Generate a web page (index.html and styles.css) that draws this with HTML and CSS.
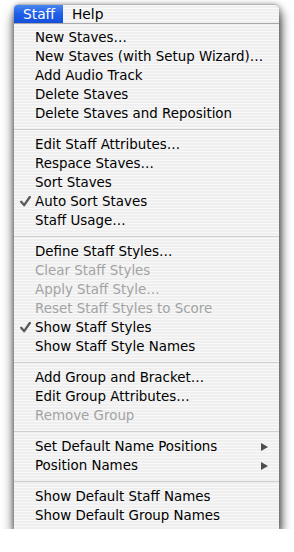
FILE: index.html
```html
<!DOCTYPE html>
<html>
<head>
<meta charset="utf-8">
<link rel="stylesheet" href="styles.css">
</head>
<body>
<div class="stage">
  <div class="menu">
    <div class="bar">
      <span class="title active">Staff</span>
      <span class="title">Help</span>
    </div>
    <div class="panel">
      <div class="item">New Staves…</div>
      <div class="item">New Staves (with Setup Wizard)…</div>
      <div class="item">Add Audio Track</div>
      <div class="item">Delete Staves</div>
      <div class="item">Delete Staves and Reposition</div>
      <div class="sep"></div>
      <div class="item">Edit Staff Attributes…</div>
      <div class="item">Respace Staves…</div>
      <div class="item">Sort Staves</div>
      <div class="item"><svg class="check" width="11" height="11" viewBox="0 0 11 11"><path d="M1.2 5.8 L4.2 9.2 L9.8 1" fill="none" stroke="#5a5a5a" stroke-width="2.3" stroke-linecap="round" stroke-linejoin="round"/></svg>Auto Sort Staves</div>
      <div class="item">Staff Usage…</div>
      <div class="sep"></div>
      <div class="item">Define Staff Styles…</div>
      <div class="item off">Clear Staff Styles</div>
      <div class="item off">Apply Staff Style…</div>
      <div class="item off">Reset Staff Styles to Score</div>
      <div class="item"><svg class="check" width="11" height="11" viewBox="0 0 11 11"><path d="M1.2 5.8 L4.2 9.2 L9.8 1" fill="none" stroke="#5a5a5a" stroke-width="2.3" stroke-linecap="round" stroke-linejoin="round"/></svg>Show Staff Styles</div>
      <div class="item">Show Staff Style Names</div>
      <div class="sep"></div>
      <div class="item">Add Group and Bracket…</div>
      <div class="item">Edit Group Attributes…</div>
      <div class="item off">Remove Group</div>
      <div class="sep"></div>
      <div class="item sub">Set Default Name Positions<span class="arrow"></span></div>
      <div class="item sub">Position Names<span class="arrow"></span></div>
      <div class="sep"></div>
      <div class="item">Show Default Staff Names</div>
      <div class="item">Show Default Group Names</div>
    </div>
  </div>
</div>
</body>
</html>
```
FILE: styles.css
```css
html, body {
  margin: 0;
  padding: 0;
  background: #ffffff;
}
.stage {
  padding: 4px 0 0 14px;
  width: 265px;
}
.menu {
  width: 265px;
  border-radius: 5px 5px 0 0;
  box-shadow: 0 9px 12px rgba(0, 0, 0, 0.7), 3px 4px 8px rgba(0, 0, 0, 0.3), 0 0 5px rgba(0, 0, 0, 0.25);
  font-family: "DejaVu Sans", sans-serif;
  font-size: 13.4px;
  color: #000;
  background: repeating-linear-gradient(to bottom, #f8f8f8 0 1px, #efefef 1px 3px);
}
.bar {
  display: flex;
  height: 18px;
  border-top: 1px solid #b4b4b4;
  border-bottom: 1px solid #a8a8a8;
  border-radius: 5px 5px 0 0;
  font-size: 13.8px;
  background: repeating-linear-gradient(to bottom, #f9f9f9 0 1px, #f0f0f0 1px 3px);
}
.title {
  display: flex;
  align-items: center;
  padding: 0 10px 0 9px;
  height: 18px;
  line-height: 18px;
}
.active {
  color: #fff;
  width: 30px;
  background: linear-gradient(to bottom, #4a86f0, #1f5ee6 50%, #1550dc);
  border-radius: 4px 0 0 0;
}
.panel {
  padding: 4px 0 4px;
}
.item {
  position: relative;
  height: 19px;
  line-height: 19px;
  padding-left: 21px;
  white-space: nowrap;
}
.off {
  color: #a3a3a3;
}
.check {
  position: absolute;
  left: 6px;
  top: 4px;
}
.arrow {
  position: absolute;
  right: 11px;
  top: 6px;
  width: 0;
  height: 0;
  border-top: 4px solid transparent;
  border-bottom: 4px solid transparent;
  border-left: 7px solid #4d4d4d;
}
.sep {
  height: 12px;
  display: flex;
  align-items: center;
}
.sep::before {
  content: "";
  display: block;
  width: 100%;
  height: 1px;
  background: #cfcfcf;
}
```
